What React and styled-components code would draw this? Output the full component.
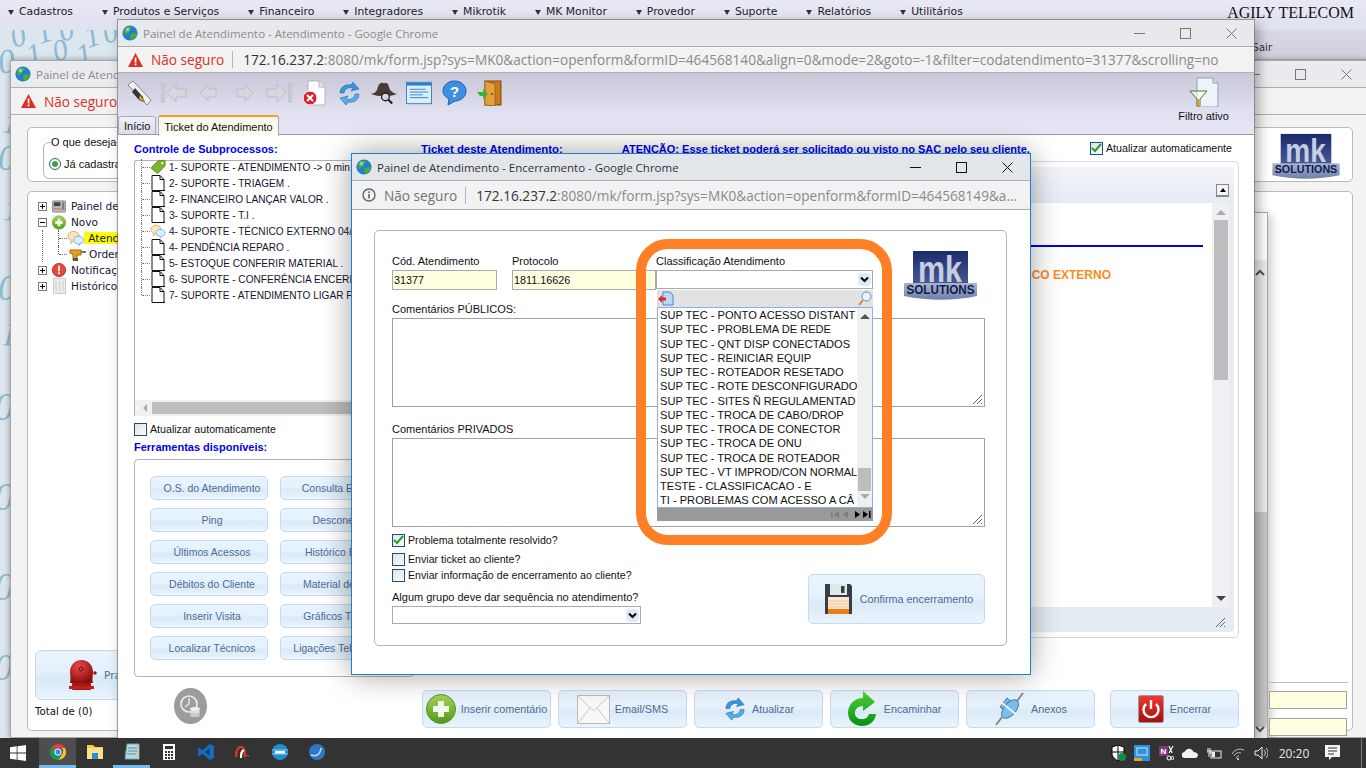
import React from 'react';
import styled, { createGlobalStyle } from 'styled-components';

const Global = createGlobalStyle`
  * { box-sizing: border-box; }
  html, body { margin: 0; padding: 0; width: 1366px; height: 768px; overflow: hidden; background: #dbe6ed; }
  body { font-family: "Liberation Sans", Arial, sans-serif; font-size: 11px; color: #111; }
`;

const Desktop = styled.div`
  position: relative; width: 1366px; height: 768px; overflow: hidden;
  display: flex; flex-direction: column;
`;
const Wallpaper = styled.svg`position: absolute; left: 0; top: 0;`;
const TopMenu = styled.nav`
  position: relative; height: 30px; flex: none; display: flex; align-items: flex-start; gap: 29px;
  padding: 5px 12px 0 8px;
  background: linear-gradient(#e9e8f5, #e2e2f2 70%, #dfe4ef);
  font-family: "DejaVu Sans", sans-serif; font-size: 10.8px; color: #222;
`;
const MenuItem = styled.span`
  display: flex; align-items: center; gap: 5px; line-height: 14px;
  &::before { content: ""; border: 3.5px solid transparent; border-top: 5px solid #333; border-bottom: 0; }
`;
const Brand = styled.span`
  margin-left: auto; font-family: "Liberation Serif", serif; font-size: 16px; line-height: 15px; color: #111;
`;
const SubBar = styled.div`
  position: relative; height: 30px; width: 220px; margin-left: auto; flex: none;
  background: linear-gradient(#d9d9e6, #cfd0dc);
  border-bottom: 1px solid #bbb; padding: 11px 0 0 106px;
  font-family: "DejaVu Sans", sans-serif; font-size: 10.5px; color: #333;
`;
const Grow = styled.div`flex: 1;`;

const Taskbar = styled.footer`
  position: relative; z-index: 5; height: 30px; flex: none; background: #333; display: flex; align-items: stretch; padding-left: 39px;
  color: #e8e8e8; font-family: "Open Sans", sans-serif; font-size: 12px;
  &::after { content: ""; position: absolute; right: 4px; top: 0; bottom: 0; width: 1px; background: #777; }
`;
const StartBtn = styled.span`
  position: absolute; left: 10px; top: 7px; display: flex;
`;
const TaskItem = styled.span`
  width: 37px; display: flex; align-items: center; justify-content: center; position: relative;
  background: ${p => (p.$active ? '#4e4e4e' : 'transparent')};
  border-bottom: ${p => (p.$active || p.$open ? '3px solid #76b9ed' : '3px solid transparent')};
`;
const Tray = styled.div`
  margin-left: auto; display: flex; align-items: center; padding-right: 18px;
`;
const TrayIcon = styled.span`display: flex; width: ${p => p.$w}px; justify-content: center;`;
const Clock = styled.span`width: 44px; text-align: center; font-size: 12px;`;

const Win = styled.section`
  position: absolute; left: ${p => p.$x}px; top: ${p => p.$y}px; width: ${p => p.$w}px; height: ${p => p.$h}px;
  z-index: ${p => p.$z}; display: flex; flex-direction: column; background: #fff;
  box-shadow: ${p => p.$shadow};
  border: ${p => p.$border};
`;
const TitleBar = styled.header`
  height: 26px; flex: none; display: flex; align-items: center; padding-left: 4px; gap: 5px;
  background: ${p => p.$bg}; color: ${p => p.$color};
  font-family: "Open Sans", sans-serif; font-size: 11.5px; white-space: nowrap; overflow: hidden;
`;
const TitleText = styled.span`flex: 1; overflow: hidden;`;
const CtlGroup = styled.span`display: flex; flex: none;`;
const Ctl = styled.span`width: 46px; height: 26px; flex: none; display: flex; align-items: center; justify-content: center;`;
const UrlBar = styled.div`
  height: ${p => p.$h}px; flex: none; display: flex; align-items: center; padding-left: ${p => p.$pad}px;
  background: #f2f2f2; border-top: 1px solid #aeaeae; border-bottom: 1px solid #aeaeae;
  font-family: "Open Sans", sans-serif; font-size: 13.64px; white-space: nowrap; overflow: hidden;
`;
const NotSafe = styled.span`margin-left: 8px; color: ${p => p.$color};`;
const UrlSep = styled.span`width: 1px; height: 17px; background: #b5b5b5; margin: 0 10px 0 8px; flex: none;`;
const Host = styled.span`color: #333;`;
const Rest = styled.span`color: #8a8a8a;`;

/* Window 1 */
const W1Body = styled.div`
  flex: 1; background: #f3f3f3; padding: 12px 16px 6px; display: flex; flex-direction: column; gap: 9px; min-height: 0;
`;
const Panel = styled.div`
  background: #fff; border: 1px solid #bdb9bd; border-radius: 5px;
`;
const W1Top = styled(Panel)`
  height: 55px; flex: none; display: flex; justify-content: space-between; padding: 5px 11px 0 15px;
`;
const Fieldset = styled.div`
  position: relative; width: 600px; height: 37px; margin-top: 9px; border: 1px solid #b5b5b5; border-radius: 6px 0 0 6px;
  display: flex; align-items: center; padding: 7px 0 0 5px; gap: 3px;
`;
const Legend = styled.span`position: absolute; left: 7px; top: -7px; background: #fff; line-height: 13px;`;
const Radio = styled.span`
  width: 12px; height: 12px; border-radius: 50%; border: 1px solid #1d5a80; background: #fff; display: flex; align-items: center; justify-content: center;
  &::after { content: ""; width: 6px; height: 6px; border-radius: 50%; background: #3aa53a; }
`;
const W1Main = styled(Panel)`
  flex: 1; display: flex; padding: 0 4px 0 7px; justify-content: space-between; min-height: 0;
`;
const W1Left = styled.div`width: 320px; display: flex; flex-direction: column; padding-top: 6px;`;
const TreeRow = styled.div`
  height: 16px; display: flex; align-items: center; gap: ${p => p.$gap ?? 5}px; padding-left: ${p => p.$pad ?? 3}px;
  white-space: nowrap; color: #15153a; font-family: "DejaVu Sans", sans-serif; font-size: 10.5px;
`;
const TreeGroup = styled.div`margin-left: 7px; border-left: 1px dotted #666;`;
const TreeIcon = styled.span`width: 14px; height: 16px; flex: none; display: flex; align-items: center; justify-content: center;`;
const Exp = styled.span`
  width: 9px; height: 9px; border: 1px solid #777; background: #fff; position: relative; flex: none;
  &::before { content: ""; position: absolute; left: 1px; right: 1px; top: 3px; height: 1px; background: #000; }
  &::after { content: ""; position: absolute; top: 1px; bottom: 1px; left: 3px; width: 1px; background: #000; display: ${p => (p.$minus ? 'none' : 'block')}; }
`;
const Dots = styled.span`
  width: 9px; flex: none; align-self: flex-start; position: relative;
  border-left: 1px dotted #666; height: ${p => (p.$last ? 8 : 16)}px;
  &::after { content: ""; position: absolute; left: 0; right: 0; top: 8px; border-top: 1px dotted #666; }
`;
const Marked = styled.span`background: #ffff00; padding: 0 1px; margin-left: -1px;`;
const BellBtn = styled.div`
  margin-top: 356px; height: 50px; width: 300px; flex: none; border: 1px solid #c3daec; border-radius: 6px;
  background: linear-gradient(#e8f3fd, #e4f0fb 45%, #d9e9f7 55%, #e9f4fd);
  display: flex; align-items: center; padding-left: 32px; gap: 7px; color: #4d709c; font-family: "DejaVu Sans", sans-serif; font-size: 10.5px;
`;
const TotalLine = styled.div`margin-top: 5px; font-family: "DejaVu Sans", sans-serif; font-size: 10.2px; line-height: 13px;`;
const W1Right = styled.div`display: flex; align-items: flex-start;`;
const BehindCard = styled.div`
  width: 120px; height: 530px; margin-top: 20px; display: flex; justify-content: flex-end;
  background: #fff; border: 1px solid #a9a9a9; box-shadow: 4px 3px 8px rgba(0,0,0,.18);
`;
const BehindBar = styled.div`
  width: 15px; height: 100%; margin-top: 0; display: flex; flex-direction: column; align-items: center;
`;
const BehindTop = styled.div`height: 47px; flex: none;`;
const BehindTrack = styled.div`
  flex: 1; width: 100%; background: #ededed; display: flex; flex-direction: column; align-items: center; padding-top: 9px; position: relative;
`;
const BehindThumb = styled.div`position: absolute; left: 0; right: 0; top: 252px; bottom: 14px; background: #c8c8c8;`;
const BehindBottom = styled.span`position: absolute; bottom: 6px;`;
const W1Side = styled.div`width: 80px; padding: 490px 0 0 1px; display: flex; flex-direction: column;`;
const SideRule = styled.div`height: 1px; background: #bbb; margin-bottom: 8px;`;
const SideInput = styled.div`width: 78px; height: 18px; flex: none; margin-bottom: 9px; background: #ffffe0; border: 1px solid #a0a0a0;`;

/* Window 2 */
const Toolbar = styled.div`
  height: 62px; flex: none; position: relative; display: flex; flex-direction: column;
  background: linear-gradient(#c9c9d8, #d2d2e2 30%, #dfdff0 60%, #e6e6f6);
  border-bottom: 1px solid #9a9a9a;
`;
const ToolRow = styled.div`display: flex; gap: 9px; padding: 7px 0 0 8px; height: 42px; flex: none;`;
const ToolIcon = styled.span`width: 26px; height: 26px; display: flex; align-items: center; justify-content: center;`;
const FilterTool = styled.div`
  position: absolute; right: 25px; top: 4px; display: flex; flex-direction: column; align-items: center; gap: 3px;
  font-size: 11px; color: #111;
`;
const Tabs = styled.div`display: flex; gap: 2px; height: 20px; align-items: flex-end;`;
const Tab = styled.span`
  height: ${p => (p.$on ? 21 : 19)}px; padding: 0 5px; display: flex; align-items: center; margin-bottom: ${p => (p.$on ? -1 : 0)}px;
  font-size: 11px; color: #111; border-radius: 3px 3px 0 0;
  background: ${p => (p.$on ? 'linear-gradient(#f9f6ea,#fffef6)' : 'linear-gradient(#f0f0f6,#dcdcec)')};
  border: 1px solid ${p => (p.$on ? '#a9a9a9' : '#9fa9b8')};
  border-bottom: ${p => (p.$on ? '0' : '1px solid #9a9a9a')};
  border-top: ${p => (p.$on ? '2px solid #f0a028' : '1px solid #9fb0c4')};
`;
const W2Body = styled.div`flex: 1; display: flex; flex-direction: column; background: #fff; min-height: 0;`;
const W2Cols = styled.div`height: 555px; flex: none; display: flex;`;
const W2Left = styled.div`width: 300px; flex: none; padding: 8px 0 0 16px; display: flex; flex-direction: column;`;
const BlueTitle = styled.div`
  color: #0000ee; font-weight: bold; font-size: ${p => p.$size || 11}px; line-height: 13px; white-space: nowrap; margin-top: ${p => p.$mt || 0}px;
  text-decoration: ${p => (p.$under ? 'underline' : 'none')};
`;
const SubTree = styled.div`
  height: 256px; width: 280px; margin-top: 4px; border: 1px solid #b0b0b0; border-right: 0; border-bottom: 0; border-radius: 3px 0 0 0;
  display: flex; flex-direction: column; flex: none;
`;
const SubRows = styled.div`flex: 1; padding-left: 6px; margin-top: -2px;`;
const SubRow = styled.div`
  height: 16px; display: flex; align-items: center; white-space: nowrap; gap: 3px; font-size: 10.1px; color: #151530;
`;
const SubDots = styled.span`
  width: 9px; flex: none; margin-right: -3px; align-self: flex-start; position: relative;
  border-left: 1px dotted #777; height: ${p => (p.$last ? 8 : 16)}px;
  &::after { content: ""; position: absolute; left: 0; right: 0; top: 8px; border-top: 1px dotted #777; }
`;
const SubIcon = styled.span`width: 16px; height: 16px; display: flex; justify-content: center; flex: none;`;
const HScroll = styled.div`
  height: 16px; flex: none; background: #f0f0f0; display: flex; align-items: center; padding-left: 8px; gap: 5px;
  &::before { content: ""; border: 4px solid transparent; border-right: 4px solid #aaa; border-left: 0; }
  &::after { content: ""; flex: 1; height: 12px; background: #bdbdbd; }
`;
const CheckRow = styled.label`
  display: flex; align-items: center; gap: 3px; line-height: 14px; height: ${p => p.$h || 14}px; margin-top: ${p => p.$mt || 0}px;
  font-size: 10.65px; color: #111; white-space: nowrap;
`;
const Box = styled.span`
  width: 13px; height: 13px; flex: none; border: 1px solid #1d4f7c; background: linear-gradient(135deg, #e4e4e4, #fafafa);
  display: flex; align-items: center; justify-content: center;
`;
const Tools = styled.div`
  width: 280px; height: 218px; margin-top: 5px; border: 1px solid #b5b5b5; border-radius: 4px; padding: 16px 15px;
  display: grid; grid-template-columns: 118px 118px; grid-auto-rows: 24px; gap: 8px 12px; flex: none;
`;
const SoftBtn = styled.span`
  border: 1px solid #c5daec; border-radius: 5px;
  background: linear-gradient(#e8f3fd, #e5f1fc 45%, #daeaf8 58%, #e9f4fd);
  color: #4e6c94; font-size: 10.8px; display: flex; align-items: center; justify-content: center; gap: ${p => p.$gap || 0}px;
  white-space: nowrap; overflow: hidden;
`;
const ToolBtn = styled(SoftBtn)`padding-left: 6px; font-size: 10.5px;`;
const W2Right = styled.div`flex: 1; display: flex; flex-direction: column; padding: 8px 15px 0 3px; min-width: 0;`;
const NoticeRow = styled.div`display: flex; height: 13px; align-items: center;`;
const AttentionTitle = styled(BlueTitle)`margin-left: 59px;`;
const AutoCheck = styled(CheckRow)`margin-left: auto; margin-right: 7px; margin-top: -3px;`;
const TicketPanel = styled.div`
  margin-top: 5px; height: 477px; border: 1px solid #d8d8d8; border-radius: 5px; padding: 5px 4px 5px 4px; display: flex; flex: none;
`;
const TicketInner = styled.div`
  flex: 1; border-radius: 4px; display: flex; flex-direction: column;
  background: linear-gradient(#f3f4f8, #e5ecf4 36px);
  padding-right: 5px;
`;
const TicketHead = styled.div`height: 36px; flex: none; display: flex; justify-content: flex-end; align-items: flex-start; padding: 17px 0 0;`;
const MiniBtn = styled.span`
  width: 13px; height: 13px; background: #f5f5f5; border: 1px solid #8a8a8a; border-bottom-width: 2px; display: flex; align-items: center; justify-content: center;
  &::after { content: ""; border: 3px solid transparent; border-bottom: 4px solid #000; border-top: 0; }
`;
const TicketWrap = styled.div`height: 404px; flex: none; display: flex;`;
const TicketText = styled.div`flex: 1; background: #fff; padding-top: 42px; padding-right: 9px; min-width: 0;`;
const BlueRule = styled.div`height: 2px; background: #0000f0;`;
const OrangeText = styled.div`
  margin-top: 21px; margin-left: 501px; font-size: 12px; font-weight: bold; color: #ff8a1c; white-space: nowrap;
`;
const VBar = styled.div`
  width: 17px; flex: none; background: #f0f0f0; display: flex; flex-direction: column; align-items: center; padding-top: 7px;
`;
const ArrowUp = styled.span`border: 5px solid transparent; border-bottom: 5px solid ${p => p.$c || '#aaa'}; border-top: 0;`;
const ArrowDown = styled.span`border: 5px solid transparent; border-top: 5px solid ${p => p.$c || '#444'}; border-bottom: 0; margin-top: auto; margin-bottom: 6px;`;
const VThumb = styled.div`width: 14px; height: 160px; margin-top: 5px; background: #bdbdbd;`;
const GripRow = styled.div`flex: 1; display: flex; justify-content: flex-end; align-items: flex-end; padding: 0 3px 4px 0;`;
const BottomBar = styled.div`height: 38px; flex: none; display: flex; align-items: center; padding-left: 56px;`;
const ClockBadge = styled.span`display: flex; margin-right: 215px; margin-top: -6px;`;
const ActionRow = styled.div`display: flex; gap: 7px;`;
const ActionBtn = styled(SoftBtn)`
  width: 129px; height: 38px; margin-left: ${p => p.$ml || 0}px; flex: none; font-size: 10.8px;
`;

/* Window 3 */
const W3Body = styled.div`flex: 1; padding: 20px 23px 28px 22px; background: #fff; display: flex; min-height: 0;`;
const FormPanel = styled.form`
  flex: 1; border: 1px solid #b8b4b8; border-radius: 5px; padding: 20px 21px 0 17px; display: flex; flex-direction: column;
`;
const TopFields = styled.div`height: 52px; flex: none; display: flex; align-items: flex-start;`;
const Field = styled.div`
  position: relative; width: ${p => p.$w}px; margin-right: ${p => p.$mr || 0}px; margin-top: 4px; flex: none;
`;
const FieldLabel = styled.div`font-size: 11px; line-height: 13px; color: #111; margin-bottom: ${p => p.$mb || 2}px; white-space: nowrap;`;
const ReadInput = styled.div`
  height: 20px; background: #ffffe0; border: 1px solid #aaa; font-size: 10.8px; line-height: 19px; padding-left: 1px; color: #111;
`;
const SelectBox = styled.div`
  height: ${p => p.$h}px; width: ${p => p.$w ? p.$w + 'px' : '100%'}; background: #fff; border: 1px solid #aaa; display: flex; align-items: center; justify-content: flex-end; padding-right: 1px;
`;
const SelectBtn = styled.span`
  width: 13px; height: 13px; border-radius: 4px; background: #dfeaf7; display: flex; align-items: center; justify-content: center;
`;
const Dropdown = styled.div`
  position: absolute; left: 1px; top: 35px; width: 216px; z-index: 3; display: flex; flex-direction: column; background: #fff;
`;
const DropHead = styled.div`
  height: 17px; background: #e2e2e2; display: flex; justify-content: space-between; align-items: center; padding: 0 1px;
`;
const DropList = styled.div`
  height: 201px; display: flex; border: 1px solid #8fb0e6; border-bottom-width: 1px;
`;
const Options = styled.div`flex: 1; overflow: hidden; padding: 0 0 0 2px; min-width: 0;`;
const Option = styled.div`
  height: 14.27px; line-height: 14.27px; font-size: 11.1px; color: #111; white-space: nowrap; overflow: hidden;
`;
const DropBar = styled.div`
  width: 15px; flex: none; background: #f0f0f0; display: flex; flex-direction: column; align-items: center; padding-top: 6px;
`;
const DropThumb = styled.div`width: 13px; height: 23px; margin-top: 149px; background: #bdbdbd;`;
const DropArrowDown = styled(ArrowDown)`margin-top: 3px;`;
const DropFoot = styled.div`
  height: 13px; background: #999; display: flex; justify-content: flex-end; align-items: center; padding-right: 2px;
`;
const Logo = styled.span`display: flex; margin-left: 30px; margin-top: -1px;`;
const Comment = styled.div`
  height: 89px; flex: none; border: 1px solid #a0a0a0; position: relative;
`;
const Grip = styled.span`position: absolute; right: 1px; bottom: 1px; display: flex;`;
const CommentLabel = styled(FieldLabel)`margin-top: ${p => p.$mt || 0}px;`;
const FormBottom = styled.div`display: flex; justify-content: space-between; align-items: flex-end; flex: 1;`;
const FormLeft = styled.div`display: flex; flex-direction: column; padding-bottom: 21px;`;
const ConfirmBtn = styled(SoftBtn)`width: 177px; height: 50px; margin-bottom: 21px; font-size: 10.8px; padding-left: 4px;`;
const Ring = styled.div`
  position: absolute; left: 636px; top: 239px; width: 256px; height: 306px; z-index: 4;
  border: 10px solid #ff7f27; border-radius: 32px; pointer-events: none;
`;

/* Icons */
const Globe = () => (
  <svg width="16" height="16" viewBox="0 0 16 16"><circle cx="8" cy="8" r="7.6" fill="#1f7fd0" /><path d="M2 5c2-3 5-4 8-3 1 1-1 2-2 2-1 1 0 2-1 3S4 9 4 10 2 8 2 5zM9 9c2-1 5-1 6 0-1 3-3 5-6 6-1-2-1-5 0-6z" fill="#4fae2e" /><circle cx="5.6" cy="4.4" r="2" fill="#bde3fb" opacity=".6" /></svg>
);
const Warn = () => (
  <svg width="15" height="14" viewBox="0 0 15 14"><path d="M7.5 0L15 14H0z" fill="#d93025" /><rect x="6.7" y="4.5" width="1.7" height="5" fill="#fff" /><rect x="6.7" y="10.5" width="1.7" height="1.8" fill="#fff" /></svg>
);
const Info = () => (
  <svg width="14" height="14" viewBox="0 0 14 14" fill="none"><circle cx="7" cy="7" r="6" stroke="#5f6368" strokeWidth="1.4" /><rect x="6.2" y="6" width="1.6" height="4.5" fill="#5f6368" /><rect x="6.2" y="3.4" width="1.6" height="1.6" fill="#5f6368" /></svg>
);
const MinI = ({ c }) => <svg width="11" height="11" viewBox="0 0 11 11"><path d="M0 5.5h11" stroke={c} /></svg>;
const MaxI = ({ c }) => <svg width="11" height="11" viewBox="0 0 11 11" fill="none"><rect x=".5" y=".5" width="10" height="10" stroke={c} /></svg>;
const CloseI = ({ c }) => <svg width="11" height="11" viewBox="0 0 11 11"><path d="M.5.5l10 10M10.5.5l-10 10" stroke={c} /></svg>;
const Controls = ({ c }) => (
  <CtlGroup><Ctl><MinI c={c} /></Ctl><Ctl><MaxI c={c} /></Ctl><Ctl><CloseI c={c} /></Ctl></CtlGroup>
);
const Check = () => <svg width="11" height="10" viewBox="0 0 11 10" fill="none"><path d="M1 5l3 3 6-7" stroke="#2ba02b" strokeWidth="2.2" /></svg>;
const Chev = () => <svg width="9" height="7" viewBox="0 0 9 7" fill="none"><path d="M1 1.5l3.5 3.5L8 1.5" stroke="#000" strokeWidth="2" /></svg>;
const Doc = () => (
  <svg width="14" height="16" viewBox="0 0 14 16"><path d="M1 .5h8l4 4v11H1z" fill="#fff" stroke="#111" /><path d="M9 .5v4h4" fill="none" stroke="#111" /><path d="M2 15.5h12" stroke="#111" /></svg>
);
const Tag = () => (
  <svg width="16" height="16" viewBox="0 0 17 16"><path d="M1 9l8-8h7v6l-8 8z" fill="#7ab52f" stroke="#5a8f1d" /><circle cx="13" cy="4" r="1.2" fill="#fff" /></svg>
);
const Chat = () => (
  <svg width="18" height="17" viewBox="0 0 19 17"><path d="M1 6c0-3 3-5 6-5s6 2 6 5-3 5-6 5l-3 3v-4C2 9 1 8 1 6z" fill="#fde4bc" stroke="#e5a55b" /><path d="M7 10c0-2 2-4 5-4s6 2 6 4-2 4-5 4v2l-2-2c-2 0-4-2-4-4z" fill="#d7eeff" stroke="#6aaee0" /></svg>
);
const PanelI = () => (
  <svg width="15" height="15" viewBox="0 0 15 15"><rect x=".5" y="1.5" width="14" height="12" rx="1" fill="#bbb" stroke="#888" /><rect x="2" y="3" width="7" height="4" fill="#444" /><path d="M2 10h2M5 10h2M8 10h2" stroke="#d33" /><rect x="11" y="3" width="2" height="8" fill="#777" /></svg>
);
const PlusGreen = ({ s = 15 }) => (
  <svg width={s} height={s} viewBox="0 0 30 30"><defs><linearGradient id="gp" x1="0" y1="0" x2="0" y2="1"><stop offset="0" stopColor="#a8d65a" /><stop offset="1" stopColor="#4e9a18" /></linearGradient></defs><circle cx="15" cy="15" r="14.5" fill="url(#gp)" stroke="#5f8f2e" /><path d="M12 7h6v5h5v6h-5v5h-6v-5H7v-6h5z" fill="#f2f8ec" /></svg>
);
const Forklift = () => (
  <svg width="18" height="15" viewBox="0 0 18 15"><path d="M1 3h11v5H8v5H4V7L1 6z" fill="#e9a21a" stroke="#9a6a10" /><rect x="12" y="4" width="5" height="2" fill="#777" /><rect x="4" y="11" width="5" height="3" fill="#555" /></svg>
);
const Alert = () => (
  <svg width="16" height="16" viewBox="0 0 16 16"><circle cx="8" cy="8" r="7.5" fill="#e34a3e" stroke="#b22" /><rect x="7" y="3" width="2" height="6.5" fill="#fff" /><rect x="7" y="10.5" width="2" height="2.2" fill="#fff" /></svg>
);
const Hist = () => (
  <svg width="13" height="16" viewBox="0 0 13 16"><rect x=".5" y=".5" width="12" height="15" fill="#ececec" stroke="#ccc" /><path d="M3 3v10M6.5 3v10M10 3v10" stroke="#ccc" /></svg>
);
const Bell = () => (
  <svg width="29" height="32" viewBox="0 0 29 32"><defs><radialGradient id="bl" cx=".4" cy=".3" r=".7"><stop offset="0" stopColor="#e84b4b" /><stop offset="1" stopColor="#8d0d0d" /></radialGradient></defs><path d="M2 24C3 20 2 15 2 13 2 6 7 1 13.500 1S25 6 25 13c0 2-1 7 0 11z" fill="url(#bl)" /><rect x="4" y="24" width="19" height="7" rx="1" fill="#a51616" /><rect x="1" y="27" width="25" height="3" fill="#c02020" /><circle cx="13" cy="10" r="2" fill="none" stroke="#6a0a0a" /><circle cx="27" cy="14" r="1.800" fill="#a51616" /></svg>
);
const NavArrow = ({ dir, bar }) => (
  <svg width="26" height="22" viewBox="0 0 26 22" style={{ transform: dir === 'r' ? 'scaleX(-1)' : 'none' }}>
    {bar && <rect x="0" y="2" width="3" height="18" fill="#cfcfd6" stroke="#b9b9c2" />}
    <path d={bar ? 'M15 2L6 11l9 9v-5h10V7H15z' : 'M12 3L4 11l8 8v-4h8V7h-8z'} fill="#d6d6dc" stroke="#bdbdc6" />
  </svg>
);
const PenI = () => (
  <svg width="25" height="26" viewBox="0 0 25 26"><path d="M6 1l18 19-4 5L1 5z" fill="#f1f1f1" stroke="#888" /><path d="M8 8l8 9 1 5-5-2-7-8z" fill="#333" /><path d="M13 15l5 7-6-3z" fill="#e3b341" stroke="#8a6a1a" strokeWidth=".6" /></svg>
);
const DocX = () => (
  <svg width="24" height="26" viewBox="0 0 24 26"><path d="M6 1h11l6 6v18H6z" fill="#fff" stroke="#b5b5b5" /><path d="M17 1v6h6" fill="#e8e8e8" stroke="#b5b5b5" /><circle cx="8" cy="18" r="7" fill="#d92332" stroke="#fff" /><path d="M5 15l6 6M11 15l-6 6" stroke="#fff" strokeWidth="2" /></svg>
);
const RefreshI = ({ s = 25 }) => (
  <svg width={s} height={s} viewBox="0 0 25 25" fill="none"><path d="M3 12C3 6 8 3 14 4l2-3 6 7-8 2 2-3c-4-1-8 0-9 5z" fill="#3d95dc" stroke="#1d6bb0" strokeWidth=".6" /><path d="M22 13c0 6-5 9-11 8l-2 3-6-7 8-2-2 3c4 1 8 0 9-5z" fill="#58aee8" stroke="#1d6bb0" strokeWidth=".6" /></svg>
);
const Spy = () => (
  <svg width="27" height="24" viewBox="0 0 27 24"><path d="M0 13c4-1 6-2 7-7 2-6 5-5 7-4 3-1 4 1 5 5 1 3 4 5 8 6-8 3-19 3-27 0z" fill="#4a3b34" /><circle cx="15" cy="16" r="4" fill="#d8d8d8" stroke="#222" strokeWidth="1.4" /><path d="M18 19l4 4" stroke="#222" strokeWidth="2.2" /></svg>
);
const WinI = () => (
  <svg width="28" height="24" viewBox="0 0 28 24"><rect x=".5" y=".5" width="27" height="23" fill="#dcefff" stroke="#2f7fc6" /><rect x="1" y="1" width="26" height="3" fill="#2f7fc6" /><path d="M4 8h17M4 11h20M4 14h14M4 17h20" stroke="#2f7fc6" /></svg>
);
const Help = () => (
  <svg width="25" height="26" viewBox="0 0 25 26"><path d="M12.5 1C19 1 24 5.500 24 11S19 21 13 21l-7 4 1-6C3 17 1 14 1 11 1 5.500 6 1 12.500 1z" fill="#3d8fe0" stroke="#1e62b0" /><text x="12.500" y="17" textAnchor="middle" fill="#fff" fontSize="15" fontWeight="bold" fontFamily="Liberation Sans">?</text></svg>
);
const Door = () => (
  <svg width="26" height="26" viewBox="0 0 26 26"><rect x="9" y="1" width="16" height="24" fill="#c77b1c" stroke="#7d4a0c" /><path d="M9 1l10 3v22l-10-1z" fill="#e4a03c" stroke="#7d4a0c" strokeWidth=".6" /><circle cx="16" cy="14" r="1" fill="#6b3d08" /><path d="M1 12h6v-3l5 5-5 5v-3H4z" fill="#3caf3c" /></svg>
);
const Filter = () => (
  <svg width="30" height="30" viewBox="0 0 30 30"><path d="M8 1h16l5 5v24H8z" fill="#eef2f9" stroke="#8da1bd" /><path d="M24 1v5h5" fill="#d4deec" stroke="#8da1bd" /><path d="M1 14h17l-7 8v7H8v-7z" fill="#fff" fillOpacity=".5" stroke="#3d8a10" /><rect x="8.500" y="22" width="2" height="7" fill="#e8973a" /></svg>
);
const MkLogo = ({ w = 75, h = 50 }) => (
  <svg width={w} height={h} viewBox="0 0 75 50">
    <defs><linearGradient id="mkb" x1="0" y1="0" x2="0" y2="1"><stop offset="0" stopColor="#1a2a6a" /><stop offset="1" stopColor="#4c5f99" /></linearGradient><linearGradient id="mks" x1="0" y1="0" x2="0" y2="1"><stop offset="0" stopColor="#aab4cf" /><stop offset="1" stopColor="#6f7fa8" /></linearGradient></defs>
    <rect x="10" y="1" width="55" height="36" fill="url(#mkb)" />
    <text x="37" y="32" textAnchor="middle" fontFamily="Liberation Sans" fontWeight="bold" fontSize="36" fill="#c6cde0" textLength="44" lengthAdjust="spacingAndGlyphs">mk</text>
    <path d="M1 33h73v13c-24 5-49 5-73 0z" fill="url(#mks)" />
    <text x="37.500" y="44" textAnchor="middle" fontFamily="Liberation Sans" fontWeight="bold" fontSize="12.500" fill="#0e1c50" textLength="68" lengthAdjust="spacingAndGlyphs">SOLUTIONS</text>
  </svg>
);
const ClockI = () => (
  <svg width="33" height="36" viewBox="0 0 33 36"><ellipse cx="16.500" cy="18" rx="16.500" ry="18" fill="#9c9c9c" /><circle cx="15" cy="16" r="8" fill="none" stroke="#eee" strokeWidth="1.6" /><path d="M15 10v6l-4 3" stroke="#eee" fill="none" strokeWidth="1.4" /><ellipse cx="21" cy="24" rx="5" ry="2" fill="#ddd" /><ellipse cx="21" cy="27" rx="5" ry="2" fill="#ccc" /><ellipse cx="21" cy="21" rx="5" ry="2" fill="#eee" /></svg>
);
const Mail = () => (
  <svg width="33" height="29" viewBox="0 0 33 29" fill="none"><rect x=".5" y=".5" width="32" height="28" fill="#f8f8f8" stroke="#bbb" /><path d="M1 1l15.500 15L32 1M1 28l12-15M32 28L20 13" stroke="#c9c9c9" /></svg>
);
const GreenArrow = () => (
  <svg width="29" height="36" viewBox="0 0 29 36"><defs><linearGradient id="ga" x1="0" y1="0" x2="0" y2="1"><stop offset="0" stopColor="#4fd53a" /><stop offset="1" stopColor="#0b8f12" /></linearGradient></defs><path d="M15 0l12 11-12 9v-5c-5 0-8 3-8 7s3 6 7 6 6-2 7-5h7c-1 8-7 12-14 12S0 30 0 22 6 7 15 7z" fill="url(#ga)" /></svg>
);
const Plug = () => (
  <svg width="31" height="36" viewBox="0 0 31 36" fill="none"><path d="M2 34l6-8M23 10l6-8" stroke="#888" strokeWidth="2" /><path d="M6 22l7-9 4 3-7 9zM14 26l7-9 4 3-7 9z" fill="#7bb9ea" stroke="#4a7fb0" transform="translate(0 -6)" /><ellipse cx="16" cy="18" rx="11" ry="6" transform="rotate(-50 16 18)" fill="#7fbcec" stroke="#4a7fb0" /><path d="M8 12l15 12" stroke="#e8f4ff" strokeWidth="2" /></svg>
);
const Power = () => (
  <svg width="26" height="28" viewBox="0 0 26 28" fill="none"><defs><linearGradient id="pw" x1="0" y1="0" x2="0" y2="1"><stop offset="0" stopColor="#ef3a36" /><stop offset="1" stopColor="#a90c0c" /></linearGradient></defs><rect x=".5" y=".5" width="25" height="27" rx="2" fill="url(#pw)" stroke="#999" /><path d="M8 9a7.500 7.500 0 1 0 10 0" stroke="#fff" strokeWidth="2.400" /><path d="M13 5v9" stroke="#fff" strokeWidth="2.400" /></svg>
);
const Floppy = () => (
  <svg width="29" height="30" viewBox="0 0 29 30"><path d="M1 0h25l2 2v28H1z" fill="#3a3e44" /><rect x="6" y="0" width="17" height="11" fill="#d7ecec" /><rect x="17" y="2" width="3.500" height="7" fill="#3a3e44" /><rect x="4" y="13" width="21" height="17" fill="#fbe7cf" /><path d="M4 17h21M4 20h21M4 23h21" stroke="#e9c9a4" /><rect x="4" y="25" width="21" height="5" fill="#ef7d13" /></svg>
);
const Resize = () => <svg width="11" height="11" viewBox="0 0 11 11"><path d="M1 10l9-9M5 10l5-5M9 10l1-1" stroke="#666" /></svg>;
const DropBack = () => (
  <svg width="16" height="15" viewBox="0 0 16 15"><path d="M5 1h7l3 3v10H5z" fill="#bcd7f5" stroke="#4d88c9" /><path d="M0 8l4-4v2.500h4v3H4V12z" fill="#d92d20" /></svg>
);
const Lens = () => (
  <svg width="14" height="15" viewBox="0 0 14 15" fill="none"><circle cx="8.500" cy="5.500" r="4.500" fill="#e8f3ff" stroke="#5a8fc8" /><path d="M5 9l-4 5" stroke="#d58a2a" strokeWidth="2" /></svg>
);
const Pager = () => (
  <svg width="40" height="9" viewBox="0 0 40 9"><rect x="0" y="1" width="1.500" height="7" fill="#7d7d7d" /><path d="M8 1v7L3 4.500z" fill="#7d7d7d" /><path d="M17 1v7l-5-3.500z" fill="#7d7d7d" /><path d="M24 1v7l5-3.500z" fill="#000" /><rect x="38" y="1" width="1.500" height="7" fill="#000" /><path d="M32 1v7l5-3.500z" fill="#000" /></svg>
);
const WinLogo = () => <svg width="16" height="16" viewBox="0 0 16 16" fill="#fff"><path d="M0 2.300l6.700-1v6.300H0zM7.500 1.200L16 0v7.600H7.500zM0 8.400h6.700v6.300l-6.700-1zM7.500 8.400H16V16l-8.500-1.200z" /></svg>;
const ChromeI = () => (
  <svg width="16" height="16" viewBox="0 0 16 16"><path d="M8 0a8 8 0 0 1 7 4H8a4 4 0 0 0-3.700 2.400L2 2.700A8 8 0 0 1 8 0z" fill="#db4437" /><path d="M15 4a8 8 0 0 1-6.500 12L12 10a4 4 0 0 0-.5-6z" fill="#fbc02d" /><path d="M8.500 16A8 8 0 0 1 2 2.700l3.400 6A4 4 0 0 0 12 10z" fill="#0f9d58" /><circle cx="8" cy="8" r="3.200" fill="#4285f4" stroke="#fff" /></svg>
);
const Folder = () => <svg width="16" height="15" viewBox="0 0 16 15"><path d="M0 1h6l2 2h8v12H0z" fill="#f7c94a" /><path d="M0 4h16v11H0z" fill="#ffe08a" /><rect x="5" y="9" width="6" height="6" fill="#2a8fd8" /></svg>;
const Notepad = () => <svg width="16" height="17" viewBox="0 0 16 17"><path d="M3 1h12v15H1z" fill="#b6d7e6" stroke="#6aa" /><path d="M4 5h9M4 8h9M3 11h9" stroke="#5a8fa8" /><rect x="13" y="3" width="2" height="13" fill="#d4c79a" /></svg>;
const Calc = () => <svg width="12" height="16" viewBox="0 0 12 16"><rect width="12" height="16" fill="#fff" /><rect x="2" y="2" width="8" height="3" fill="#333" /><path d="M2 7h2v2H2zM5 7h2v2H5zM8 7h2v2H8zM2 10h2v2H2zM5 10h2v2H5zM8 10h2v2H8zM2 13h2v2H2zM5 13h2v2H5zM8 13h2v2H8z" fill="#333" /></svg>;
const VSCode = () => <svg width="16" height="16" viewBox="0 0 16 16"><path d="M11.500 0L16 2v12l-4.500 2L4.500 9.500 1.500 12 0 11V5l1.500-1 3 2.500zM11.500 4.500L7 8l4.500 3.500z" fill="#0f6fc6" /></svg>;
const RedApp = () => <svg width="16" height="14" viewBox="0 0 16 14" fill="none"><path d="M1 12c0-6 2-10 5-10s4 4 4 10" stroke="#d32" strokeWidth="2.500" /><path d="M6 13c0-4 0-7 3-8" stroke="#fff" strokeWidth="2" /><path d="M12 8v4l-2-2h5l-2 2z" fill="#d32" /></svg>;
const Unms = () => <svg width="16" height="16" viewBox="0 0 16 16"><circle cx="8" cy="8" r="8" fill="#1c8fd6" /><path d="M0 6h16M0 10h16" stroke="#fff" strokeWidth=".8" opacity=".7" /><rect x="3" y="7" width="10" height="2.500" fill="#fff" /></svg>;
const Winbox = () => <svg width="16" height="16" viewBox="0 0 16 16"><circle cx="8" cy="8" r="8" fill="#2f77c9" /><path d="M2 11c5 2 9 0 10-7" stroke="#bfe0ff" strokeWidth="1.600" fill="none" /></svg>;
const Shield = () => <svg width="15" height="16" viewBox="0 0 15 16"><path d="M7 0l6 2v6c0 4-3 6-6 8-3-2-6-4-6-8V2z" fill="#fff" stroke="#000" /><path d="M7 0v16M1 7h12" stroke="#000" /><circle cx="11" cy="12" r="4" fill="#0e8f4a" /></svg>;
const Tile = () => <svg width="16" height="16" viewBox="0 0 16 16"><rect width="16" height="16" fill="#2d93d8" /><rect x="3" y="3" width="10" height="7" fill="none" stroke="#cfe8f8" /><rect y="13" width="8" height="3" fill="#d8a93a" /></svg>;
const OneNote = () => <svg width="15" height="16" viewBox="0 0 15 16" fill="none"><path d="M0 1h9v10H0z" fill="#80397b" /><path d="M10 1l3 7M14 1l-4 7" stroke="#fff" strokeWidth="1.200" /><circle cx="10" cy="13" r="2" stroke="#fff" /><circle cx="13.500" cy="13" r="1.500" stroke="#fff" /><text x="1.500" y="9" fontSize="8" fontWeight="bold" fill="#fff" fontFamily="Liberation Sans">N</text></svg>;
const Cloud = () => <svg width="16" height="10" viewBox="0 0 16 10"><path d="M3 10a3 3 0 0 1-.5-6C3.500 1.500 6 0 8.500 1c1.500.5 2.500 1.500 3 3 2.500 0 4.500 1.500 4.500 3s-1 3-3 3z" fill="#f2f2f2" /></svg>;
const Battery = () => <svg width="16" height="13" viewBox="0 0 16 13" fill="none"><rect x="5" y="4" width="10" height="7" stroke="#eee" /><rect x="6" y="5" width="3" height="5" fill="#eee" /><path d="M2 1v5M4 1v5M1 4h4v2H3v4" stroke="#eee" /></svg>;
const Wifi = () => <svg width="14" height="13" viewBox="0 0 14 13" fill="none"><path d="M1 7a9 9 0 0 1 12-4M3 9a6 6 0 0 1 7-3M5 11a3 3 0 0 1 3-2" stroke="#bbb" /><circle cx="7" cy="12" r="1" fill="#eee" /></svg>;
const Volume = () => <svg width="14" height="14" viewBox="0 0 14 14" fill="none"><path d="M1 5h3l4-4v12l-4-4H1z" stroke="#eee" /><path d="M10 4a4 4 0 0 1 0 6M12 2a7 7 0 0 1 0 10" stroke="#ccc" /></svg>;
const Notif = () => <svg width="15" height="16" viewBox="0 0 15 16"><path d="M0 0h15v12H7l-3 3v-3H0z" fill="#f4f4f4" /><path d="M3 3h9M3 6h9M3 9h6" stroke="#333" /></svg>;

const digits = [
  [14, 48, '0', -18, 30], [40, 44, '1', -18, 30], [62, 42, '0', -18, 30], [88, 48, '1', -18, 30], [106, 44, '0', -18, 30],
  [30, 66, '1', -18, 30], [56, 62, '0', -18, 30], [80, 66, '1', -18, 30], [0, 74, '0', -10, 34],
  [3, 220, '1', 5, 30], [-2, 170, '0', 0, 36], [-2, 300, '0', 0, 36], [3, 345, 'I', 5, 32], [-6, 420, '0', 0, 40],
  [-6, 510, '0', 0, 40], [-6, 600, '0', 0, 40], [-6, 680, '0', 0, 38], [2, 132, '1', 10, 28],
];

const options = ['SUP TEC - PONTO ACESSO DISTANT', 'SUP TEC - PROBLEMA DE REDE', 'SUP TEC - QNT DISP CONECTADOS', 'SUP TEC - REINICIAR EQUIP', 'SUP TEC - ROTEADOR RESETADO', 'SUP TEC - ROTE DESCONFIGURADO', 'SUP TEC - SITES Ñ REGULAMENTAD', 'SUP TEC - TROCA DE CABO/DROP', 'SUP TEC - TROCA DE CONECTOR', 'SUP TEC - TROCA DE ONU', 'SUP TEC - TROCA DE ROTEADOR', 'SUP TEC - VT IMPROD/CON NORMAL', 'TESTE - CLASSIFICACAO - E', 'TI - PROBLEMAS COM ACESSO A CÂ'];
const subs = [['1- SUPORTE - ATENDIMENTO -> 0 min', 'tag'], ['2- SUPORTE - TRIAGEM .', 'doc'], ['2- FINANCEIRO LANÇAR VALOR .', 'doc'], ['3- SUPORTE - T.I .', 'doc'], ['4- SUPORTE - TÉCNICO EXTERNO 04/11', 'chat'], ['4- PENDÊNCIA REPARO .', 'doc'], ['5- ESTOQUE CONFERIR MATERIAL .', 'doc'], ['6- SUPORTE - CONFERÊNCIA ENCERRAMENTO', 'doc'], ['7- SUPORTE - ATENDIMENTO LIGAR PARA CLIENTE', 'doc']];
const tools = ['O.S. do Atendimento', 'Consulta Externa', 'Ping', 'Desconectar', 'Últimos Acessos', 'Histórico Banda', 'Débitos do Cliente', 'Material de Obra', 'Inserir Visita', 'Gráficos Tráfego', 'Localizar Técnicos', 'Ligações Telefônicas'];
const menu = ['Cadastros', 'Produtos e Serviços', 'Financeiro', 'Integradores', 'Mikrotik', 'MK Monitor', 'Provedor', 'Suporte', 'Relatórios', 'Utilitários'];
const URL2 = ':8080/mk/form.jsp?sys=MK0&action=openform&formID=464568140&align=0&mode=2&goto=-1&filter=codatendimento=31377&scrolling=no';
const URL3 = ':8080/mk/form.jsp?sys=MK0&action=openform&formID=464568149&a...';

export default function App() {
  return (
    <Desktop>
      <Global />
      <Wallpaper width="1366" height="768">
        {digits.map(([x, y, t, r, s], i) => (
          <text key={i} x={x} y={y} fontSize={s} fontFamily="Liberation Serif" fontStyle="italic" fill="#8fbad2" transform={`rotate(${r} ${x} ${y})`}>{t}</text>
        ))}
      </Wallpaper>
      <TopMenu>
        {menu.map(m => <MenuItem key={m}>{m}</MenuItem>)}
        <Brand>AGILY TELECOM</Brand>
      </TopMenu>
      <SubBar>Sair</SubBar>
      <Grow />

      <Win $x={10} $y={60} $w={1360} $h={678} $z={1} $border="1px solid #a8a8a8" $shadow="0 0 6px rgba(0,0,0,.35)">
        <TitleBar $bg="#e9ebee" $color="#8c8c8c">
          <Globe />
          <TitleText>Painel de Atendimento - Atendimento - Google Chrome</TitleText>
          <Controls c="#777" />
        </TitleBar>
        <UrlBar $h={28} $pad={10}>
          <Warn /><NotSafe $color="#d93025">Não seguro</NotSafe>
        </UrlBar>
        <W1Body>
          <W1Top>
            <Fieldset>
              <Legend>O que deseja</Legend>
              <Radio /> Já cadastrado
            </Fieldset>
            <MkLogo w={70} h={46} />
          </W1Top>
          <W1Main>
            <W1Left>
              <TreeRow><Exp /><TreeIcon><PanelI /></TreeIcon>Painel de Atendimento</TreeRow>
              <TreeRow><Exp $minus /><TreeIcon><PlusGreen /></TreeIcon>Novo</TreeRow>
              <TreeGroup>
                <TreeRow $pad={15} $gap={0}><Dots /><Chat /><Marked>&nbsp;Atendimento</Marked></TreeRow>
                <TreeRow $pad={15} $gap={2}><Dots $last /><Forklift />Ordens de Serviço</TreeRow>
              </TreeGroup>
              <TreeRow><Exp /><TreeIcon><Alert /></TreeIcon>Notificações</TreeRow>
              <TreeRow><Exp /><TreeIcon><Hist /></TreeIcon>Histórico</TreeRow>
              <BellBtn><Bell /> Prazos</BellBtn>
              <TotalLine>Total de (0)</TotalLine>
            </W1Left>
            <W1Right>
              <BehindCard>
                <BehindBar>
                  <BehindTop />
                  <BehindTrack>
                    <svg width="10" height="7" viewBox="0 0 10 7" fill="none"><path d="M1 6l4-4 4 4" stroke="#555" strokeWidth="2" /></svg>
                    <BehindThumb />
                    <BehindBottom><svg width="10" height="7" viewBox="0 0 10 7" fill="none"><path d="M1 1l4 4 4-4" stroke="#555" strokeWidth="2" /></svg></BehindBottom>
                  </BehindTrack>
                </BehindBar>
              </BehindCard>
              <W1Side>
                <SideRule />
                <SideInput />
                <SideInput />
              </W1Side>
            </W1Right>
          </W1Main>
        </W1Body>
      </Win>

      <Win $x={118} $y={20} $w={1136} $h={718} $z={2} $border="0" $shadow="0 0 0 1px rgba(120,120,120,.7), 4px 4px 12px rgba(0,0,0,.35)">
        <TitleBar $bg="#e7e9ec" $color="#8c8c8c">
          <Globe />
          <TitleText>Painel de Atendimento - Atendimento - Google Chrome</TitleText>
          <Controls c="#777" />
        </TitleBar>
        <UrlBar $h={27} $pad={10}>
          <Warn /><NotSafe $color="#d93025">Não seguro</NotSafe><UrlSep />
          <Host>172.16.237.2</Host><Rest>{URL2}</Rest>
        </UrlBar>
        <Toolbar>
          <ToolRow>
            <ToolIcon><PenI /></ToolIcon>
            <ToolIcon><NavArrow bar /></ToolIcon>
            <ToolIcon><NavArrow /></ToolIcon>
            <ToolIcon><NavArrow dir="r" /></ToolIcon>
            <ToolIcon><NavArrow dir="r" bar /></ToolIcon>
            <ToolIcon><DocX /></ToolIcon>
            <ToolIcon><RefreshI /></ToolIcon>
            <ToolIcon><Spy /></ToolIcon>
            <ToolIcon><WinI /></ToolIcon>
            <ToolIcon><Help /></ToolIcon>
            <ToolIcon><Door /></ToolIcon>
          </ToolRow>
          <FilterTool><Filter />Filtro ativo</FilterTool>
          <Tabs>
            <Tab>Início</Tab>
            <Tab $on>Ticket do Atendimento</Tab>
          </Tabs>
        </Toolbar>
        <W2Body>
          <W2Cols>
            <W2Left>
              <BlueTitle>Controle de Subprocessos:</BlueTitle>
              <SubTree>
                <SubRows>
                  {subs.map(([t, k], i) => (
                    <SubRow key={t}>
                      <SubDots $last={i === subs.length - 1} />
                      <SubIcon>{k === 'tag' ? <Tag /> : k === 'chat' ? <Chat /> : <Doc />}</SubIcon>
                      {t}
                    </SubRow>
                  ))}
                </SubRows>
                <HScroll />
              </SubTree>
              <CheckRow $mt={6}><Box />Atualizar automaticamente</CheckRow>
              <BlueTitle $mt={5}>Ferramentas disponíveis:</BlueTitle>
              <Tools>
                {tools.map(t => <ToolBtn key={t}>{t}</ToolBtn>)}
              </Tools>
            </W2Left>
            <W2Right>
              <NoticeRow>
                <BlueTitle $under $size={11.4}>Ticket deste Atendimento:</BlueTitle>
                <AttentionTitle $under>ATENÇÃO: Esse ticket poderá ser solicitado ou visto no SAC pelo seu cliente.</AttentionTitle>
                <AutoCheck><Box><Check /></Box>Atualizar automaticamente</AutoCheck>
              </NoticeRow>
              <TicketPanel>
                <TicketInner>
                  <TicketHead><MiniBtn /></TicketHead>
                  <TicketWrap>
                    <TicketText>
                      <BlueRule />
                      <OrangeText>SUPORTE - TÉCNICO EXTERNO</OrangeText>
                    </TicketText>
                    <VBar>
                      <ArrowUp />
                      <VThumb />
                      <ArrowDown />
                    </VBar>
                  </TicketWrap>
                  <GripRow><Resize /></GripRow>
                </TicketInner>
              </TicketPanel>
            </W2Right>
          </W2Cols>
          <BottomBar>
            <ClockBadge><ClockI /></ClockBadge>
            <ActionRow>
              <ActionBtn $gap={5}><PlusGreen s={30} />Inserir comentário</ActionBtn>
              <ActionBtn $gap={5}><Mail />Email/SMS</ActionBtn>
              <ActionBtn $gap={5}><RefreshI s={24} />Atualizar</ActionBtn>
              <ActionBtn $gap={7}><GreenArrow />Encaminhar</ActionBtn>
              <ActionBtn $gap={6}><Plug />Anexos</ActionBtn>
              <ActionBtn $gap={6} $ml={8}><Power />Encerrar</ActionBtn>
            </ActionRow>
          </BottomBar>
        </W2Body>
      </Win>

      <Win $x={351} $y={153} $w={680} $h={522} $z={3} $border="1px solid #1a7fd4" $shadow="0 0 28px rgba(0,0,0,.38)">
        <TitleBar $bg="#e2e6ea" $color="#333">
          <Globe />
          <TitleText>Painel de Atendimento - Encerramento - Google Chrome</TitleText>
          <Controls c="#111" />
        </TitleBar>
        <UrlBar $h={30} $pad={10}>
          <Info /><NotSafe $color="#6e7378">Não seguro</NotSafe><UrlSep />
          <Host>172.16.237.2</Host><Rest>{URL3}</Rest>
        </UrlBar>
        <W3Body>
          <FormPanel>
            <TopFields>
              <Field $w={105} $mr={15}>
                <FieldLabel>Cód. Atendimento</FieldLabel>
                <ReadInput>31377</ReadInput>
              </Field>
              <Field $w={144} $mr={0}>
                <FieldLabel>Protocolo</FieldLabel>
                <ReadInput>1811.16626</ReadInput>
              </Field>
              <Field $w={217}>
                <FieldLabel>Classificação Atendimento</FieldLabel>
                <SelectBox $h={19}><SelectBtn><Chev /></SelectBtn></SelectBox>
                <Dropdown>
                  <DropHead><DropBack /><Lens /></DropHead>
                  <DropList>
                    <Options>
                      {options.map(o => <Option key={o}>{o}</Option>)}
                    </Options>
                    <DropBar>
                      <ArrowUp $c="#555" />
                      <DropThumb />
                      <DropArrowDown $c="#aaa" />
                    </DropBar>
                  </DropList>
                  <DropFoot><Pager /></DropFoot>
                </Dropdown>
              </Field>
              <Logo><MkLogo /></Logo>
            </TopFields>
            <FieldLabel>Comentários PÚBLICOS:</FieldLabel>
            <Comment><Grip><Resize /></Grip></Comment>
            <CommentLabel $mt={16} $mb={2}>Comentários PRIVADOS</CommentLabel>
            <Comment><Grip><Resize /></Grip></Comment>
            <FormBottom>
              <FormLeft>
                <CheckRow $h={14}><Box><Check /></Box>Problema totalmente resolvido?</CheckRow>
                <CheckRow $mt={5}><Box />Enviar ticket ao cliente?</CheckRow>
                <CheckRow $mt={2}><Box />Enviar informação de encerramento ao cliente?</CheckRow>
                <CommentLabel $mt={9} $mb={2}>Algum grupo deve dar sequência no atendimento?</CommentLabel>
                <SelectBox $h={18} $w={249}><SelectBtn><Chev /></SelectBtn></SelectBox>
              </FormLeft>
              <ConfirmBtn $gap={7}><Floppy />Confirma encerramento</ConfirmBtn>
            </FormBottom>
          </FormPanel>
        </W3Body>
      </Win>
      <Ring />

      <Taskbar>
        <StartBtn><WinLogo /></StartBtn>
        <TaskItem $active><ChromeI /></TaskItem>
        <TaskItem><Folder /></TaskItem>
        <TaskItem $open><Notepad /></TaskItem>
        <TaskItem><Calc /></TaskItem>
        <TaskItem><VSCode /></TaskItem>
        <TaskItem><RedApp /></TaskItem>
        <TaskItem><Unms /></TaskItem>
        <TaskItem><Winbox /></TaskItem>
        <Tray>
          <TrayIcon $w={24}><Shield /></TrayIcon>
          <TrayIcon $w={24}><Tile /></TrayIcon>
          <TrayIcon $w={24}><OneNote /></TrayIcon>
          <TrayIcon $w={24}><Cloud /></TrayIcon>
          <TrayIcon $w={24}><Battery /></TrayIcon>
          <TrayIcon $w={24}><Wifi /></TrayIcon>
          <TrayIcon $w={22}><Volume /></TrayIcon>
          <Clock>20:20</Clock>
          <TrayIcon $w={32}><Notif /></TrayIcon>
        </Tray>
      </Taskbar>
    </Desktop>
  );
}
